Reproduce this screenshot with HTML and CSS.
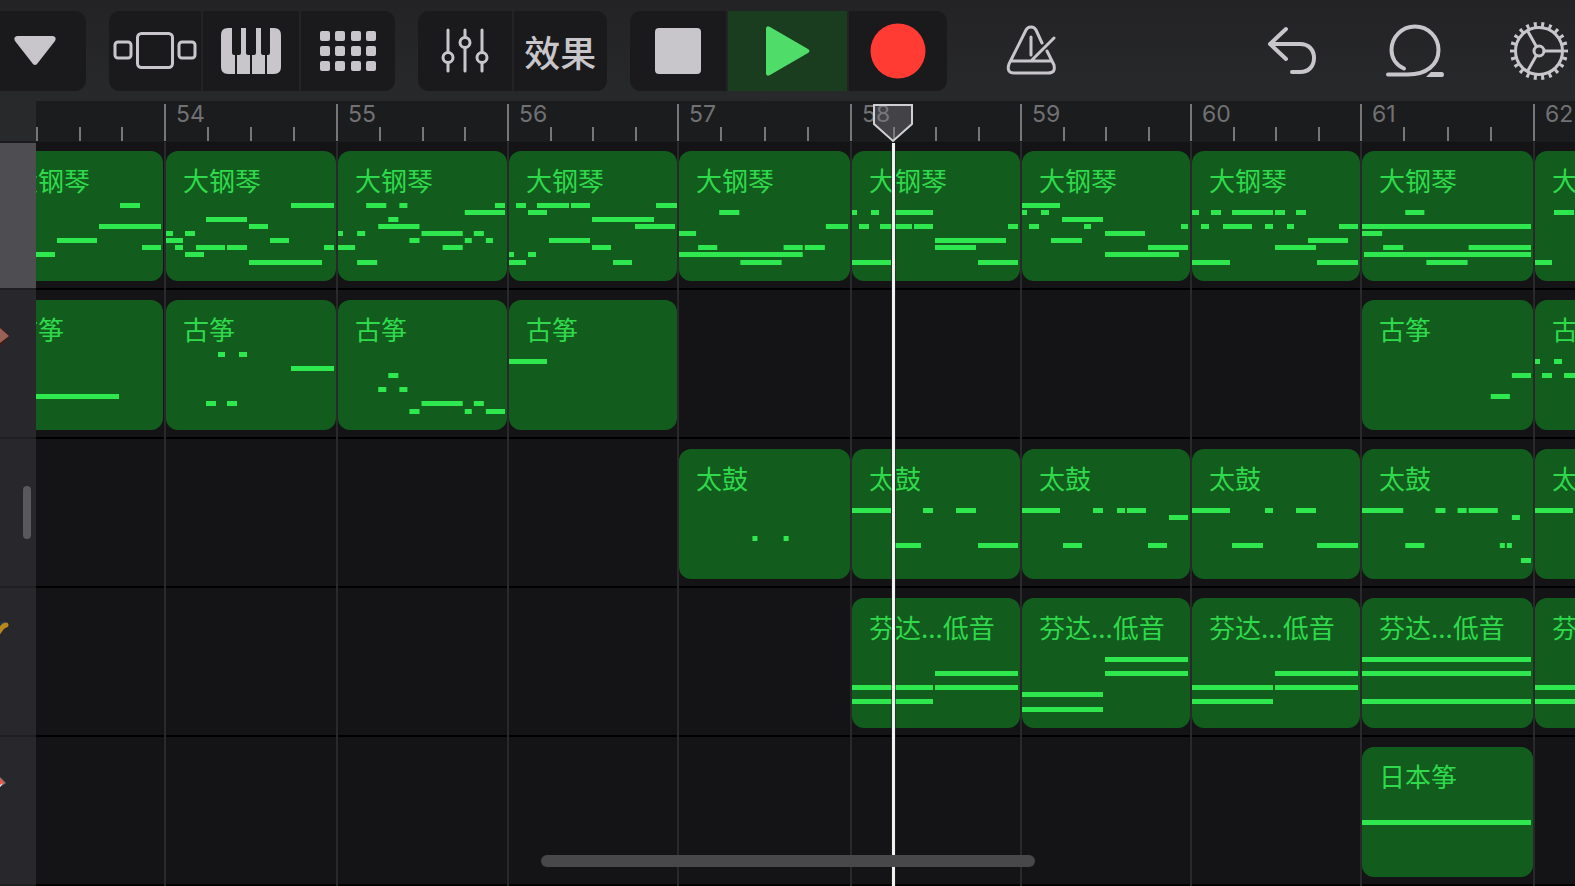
FILE: index.html
```html
<!DOCTYPE html>
<html lang="zh-CN">
<head>
<meta charset="utf-8">
<meta name="viewport" content="width=device-width, initial-scale=1">
<title>音轨视图</title>
<link rel="stylesheet" href="styles.css">
</head>
<body>
<div class="app">
  <header class="toolbar">
    <div class="group group-menu">
      <button class="tool" type="button" aria-label="菜单"><svg class="icon" width="44" height="32" viewBox="0 0 44 32"><path class="solid" d="M4 1H40Q44 2 42 6L24 29Q22 31 20 29L2 6Q0 2 4 1Z"/></svg></button>
    </div>
    <div class="group group-views">
      <button class="tool" type="button" aria-label="乐器浏览器"><svg class="icon" width="84" height="40" viewBox="0 0 84 40"><g class="line"><rect x="2" y="11" width="16" height="16" rx="3"/><rect x="24.500" y="2.500" width="35" height="34" rx="4"/><rect x="66" y="11" width="16" height="16" rx="3"/></g></svg></button>
      <button class="tool" type="button" aria-label="键盘"><svg class="icon" width="60" height="46" viewBox="0 0 60 46"><path class="solid" d="M7 0H11V25Q11 27 13 27H14V46H7Q0 46 0 39V7Q0 0 7 0Z"/><path class="solid" d="M20 0H25V25Q25 27 27 27H29V46H16V27H18Q20 27 20 25Z"/><path class="solid" d="M35 0H40V25Q40 27 42 27H44V46H31V27H33Q35 27 35 25Z"/><path class="solid" d="M49 0H53Q60 0 60 7V39Q60 46 53 46H46V27H47Q49 27 49 25Z"/></svg></button>
      <button class="tool" type="button" aria-label="循环乐段网格"><svg class="icon" width="56" height="40" viewBox="0 0 56 40"><g class="solid"><rect x="0" y="0" width="10" height="10" rx="2"/><rect x="15" y="0" width="10" height="10" rx="2"/><rect x="31" y="0" width="10" height="10" rx="2"/><rect x="46" y="0" width="10" height="10" rx="2"/><rect x="0" y="15" width="10" height="10" rx="2"/><rect x="15" y="15" width="10" height="10" rx="2"/><rect x="31" y="15" width="10" height="10" rx="2"/><rect x="46" y="15" width="10" height="10" rx="2"/><rect x="0" y="30" width="10" height="10" rx="2"/><rect x="15" y="30" width="10" height="10" rx="2"/><rect x="31" y="30" width="10" height="10" rx="2"/><rect x="46" y="30" width="10" height="10" rx="2"/></g></svg></button>
    </div>
    <div class="group group-mix">
      <button class="tool" type="button" aria-label="音轨控制"><svg class="icon" width="48" height="46" viewBox="0 0 48 46"><g class="line"><path d="M7 2V24M7 35V43M24 2V9M24 20V43M41 2V24M41 35V43"/><circle cx="7" cy="29.500" r="5"/><circle cx="24" cy="14.500" r="5"/><circle cx="41" cy="29.500" r="5"/></g></svg></button>
      <button class="tool tool-text" type="button">效果</button>
    </div>
    <div class="group group-transport">
      <button class="tool" type="button" aria-label="停止"><svg class="icon" width="46" height="46" viewBox="0 0 46 46"><rect class="solid" width="46" height="46" rx="4"/></svg></button>
      <button class="tool tool-play" type="button" aria-label="播放"><svg class="icon" width="44" height="50" viewBox="0 0 44 50"><path class="play" d="M0 2Q1-1 4 1L42 23Q45 25 42 27L4 49Q1 51 0 48Z"/></svg></button>
      <button class="tool" type="button" aria-label="录音"><svg class="icon" width="56" height="56" viewBox="0 0 56 56"><circle class="record" cx="28" cy="28" r="27.500"/></svg></button>
    </div>
    <div class="actions">
      <button class="plain" type="button" aria-label="节拍器"><svg class="icon" width="58" height="58" viewBox="0 0 58 58"><path class="line" d="M40 21L34 8C32 4 26 4 24 8L7 42C5 48 7 51 12 51H46C52 51 53 48 52 43L45 29M9 39H49M29 15V33M30 38L52 16"/></svg></button>
      <div class="actions-end">
        <button class="plain" type="button" aria-label="撤销"><svg class="icon" width="58" height="58" viewBox="0 0 58 58"><path class="line thick" d="M24 7L8 22L24 37M8 22H38C47 22 52 28 52 36C52 44 47 50 38 50H30"/></svg></button>
        <button class="plain" type="button" aria-label="循环浏览器"><svg class="icon" width="58" height="58" viewBox="0 0 58 58"><path class="line thick" d="M2 52.500H22C40 52.500 52.500 43 52.500 28A23.500 23.500 0 0 0 5.500 28C5.500 36 10 43 18 46.500"/><path class="solid" d="M45 50H56Q58 50 58 52.500T56 55H40Z"/></svg></button>
        <button class="plain" type="button" aria-label="设置"><svg class="icon" width="58" height="58" viewBox="0 0 58 58"><g class="line"><circle cx="29" cy="29" r="23.500"/><circle cx="29" cy="29" r="5"/><path d="M34 29H52M26.500 24.700L17.500 8.700M26.500 33.300L17.500 49.300"/></g><circle class="teeth" cx="29" cy="29" r="26.500" pathLength="220"/></svg></button>
      </div>
    </div>
  </header>

  <main class="workspace">
    <aside class="sidebar">
      <div class="side-top"></div>
      <div class="side-row side-selected"></div>
      <div class="side-row"><svg class="side-art" width="36" height="147" viewBox="0 0 36 147"><path fill="#4a1712" d="M0 37L9 46L0 56Z"/><path fill="#996257" d="M0 38L9 46L0 53Z"/></svg></div>
      <div class="side-row side-center"><span class="handle"></span></div>
      <div class="side-row"><svg class="side-art" width="36" height="147" viewBox="0 0 36 147"><path fill="none" stroke="#23344a" stroke-width="3" d="M0 36L5 34"/><path fill="none" stroke="#b98720" stroke-width="5" stroke-linecap="round" d="M-3 46C0 43 1 38 6 37"/></svg></div>
      <div class="side-row"><svg class="side-art" width="36" height="147" viewBox="0 0 36 147"><path fill="#777" d="M0 40L6 46L0 50Z"/><path fill="#ee5546" d="M0 41L4 46L0 48Z"/><path fill="#eee" d="M0 48L3 46L0 50Z"/></svg></div>
    </aside>

    <section class="timeline">
      <div class="ruler bars">
        <div class="bar bar-cut"><i class="tick"></i><i class="tick"></i><i class="tick"></i></div>
        <div class="bar"><span class="num">54</span><i class="tick"></i><i class="tick"></i><i class="tick"></i></div>
        <div class="bar"><span class="num">55</span><i class="tick"></i><i class="tick"></i><i class="tick"></i></div>
        <div class="bar"><span class="num">56</span><i class="tick"></i><i class="tick"></i><i class="tick"></i></div>
        <div class="bar"><span class="num">57</span><i class="tick"></i><i class="tick"></i><i class="tick"></i></div>
        <div class="bar"><span class="num">58</span><i class="tick"></i><i class="tick"></i><i class="tick"></i></div>
        <div class="bar"><span class="num">59</span><i class="tick"></i><i class="tick"></i><i class="tick"></i></div>
        <div class="bar"><span class="num">60</span><i class="tick"></i><i class="tick"></i><i class="tick"></i></div>
        <div class="bar"><span class="num">61</span><i class="tick"></i><i class="tick"></i><i class="tick"></i></div>
        <div class="bar bar-last"><span class="num">62</span></div>
      </div>

      <div class="tracks">
        <div class="lines bars"><i></i><i></i><i></i><i></i><i></i><i></i><i></i><i></i><i></i><i></i></div>

        <div class="track bars">
          <div class="clip b53"><span class="name">大钢琴</span><svg class="notes" viewBox="0 0 168 130" preserveAspectRatio="none"><path d="M125 54.500h20M104 75.500h62M62 89.500h40M147 96.500h19M41 103.500h19"/></svg></div>
          <div class="clip b54"><span class="name">大钢琴</span><svg class="notes" viewBox="0 0 170 130" preserveAspectRatio="none"><path d="M125 54.500h43M40 68.500h41M83 75.500h19M0 82.500h7M19 82.500h10M0 89.500h17M104 89.500h19M9 96.500h8M30 96.500h29M61 96.500h20M158 96.500h10M19 103.500h19M83 111.500h73"/></svg></div>
          <div class="clip b55"><span class="name">大钢琴</span><svg class="notes" viewBox="0 0 168 130" preserveAspectRatio="none"><path d="M28 54.500h20M61 54.500h8M156 54.500h10M126 61.500h40M50 68.500h10M40 75.500h41M0 82.500h5M19 82.500h8M83 82.500h41M135 82.500h10M71 89.500h10M126 89.500h7M147 89.500h7M0 96.500h17M104 96.500h20M19 111.500h20"/></svg></div>
          <div class="clip b56"><span class="name">大钢琴</span><svg class="notes" viewBox="0 0 168 130" preserveAspectRatio="none"><path d="M7 54.500h10M28 54.500h32M62 54.500h19M147 54.500h21M19 61.500h19M83 68.500h62M126 75.500h40M40 89.500h41M83 96.500h19M0 103.500h5M19 103.500h8M0 111.500h17M104 111.500h19"/></svg></div>
          <div class="clip b57"><span class="name">大钢琴</span><svg class="notes" viewBox="0 0 170 130" preserveAspectRatio="none"><path d="M40 61.500h20M146 75.500h22M0 82.500h17M19 96.500h19M104 96.500h19M125 96.500h20M0 103.500h123M61 111.500h41"/></svg></div>
          <div class="clip b58"><span class="name">大钢琴</span><svg class="notes" viewBox="0 0 168 130" preserveAspectRatio="none"><path d="M0 61.500h5M19 61.500h8M42 61.500h39M7 75.500h10M28 75.500h32M62 75.500h19M156 75.500h10M83 89.500h71M83 96.500h41M0 111.500h39M126 111.500h40"/></svg></div>
          <div class="clip b59"><span class="name">大钢琴</span><svg class="notes" viewBox="0 0 168 130" preserveAspectRatio="none"><path d="M0 54.500h38M0 61.500h5M19 61.500h8M40 68.500h41M7 75.500h10M62 75.500h7M159 75.500h7M83 82.500h40M29 89.500h31M126 96.500h40M83 103.500h74"/></svg></div>
          <div class="clip b60"><span class="name">大钢琴</span><svg class="notes" viewBox="0 0 168 130" preserveAspectRatio="none"><path d="M0 61.500h7M19 61.500h10M40 61.500h41M83 61.500h10M104 61.500h10M9 75.500h8M31 75.500h29M73 75.500h8M95 75.500h7M147 75.500h19M116 89.500h40M83 96.500h41M0 111.500h38M125 111.500h41"/></svg></div>
          <div class="clip b61"><span class="name">大钢琴</span><svg class="notes" viewBox="0 0 170 130" preserveAspectRatio="none"><path d="M43 61.500h19M0 75.500h168M0 82.500h20M21 96.500h20M106 96.500h62M2 103.500h166M64 111.500h41"/></svg></div>
          <div class="clip b62"><span class="name">大钢琴</span><svg class="notes" viewBox="0 0 168 130" preserveAspectRatio="none"><path d="M19 61.500h20M0 111.500h17"/></svg></div>
        </div>

        <div class="track bars">
          <div class="clip b53"><span class="name">古筝</span><svg class="notes" viewBox="0 0 168 130" preserveAspectRatio="none"><path d="M41 96.500h83"/></svg></div>
          <div class="clip b54"><span class="name">古筝</span><svg class="notes" viewBox="0 0 170 130" preserveAspectRatio="none"><path d="M52 54.500h7M73 54.500h8M125 68.500h43M40 103.500h10M61 103.500h10"/></svg></div>
          <div class="clip b55"><span class="name">古筝</span><svg class="notes" viewBox="0 0 168 130" preserveAspectRatio="none"><path d="M50 75.500h10M40 89.500h8M61 89.500h8M83 103.500h41M135 103.500h10M71 111.500h10M126 111.500h7M147 111.500h19"/></svg></div>
          <div class="clip b56"><span class="name">古筝</span><svg class="notes" viewBox="0 0 168 130" preserveAspectRatio="none"><path d="M0 61.500h38"/></svg></div>
          <div class="clip b61"><span class="name">古筝</span><svg class="notes" viewBox="0 0 170 130" preserveAspectRatio="none"><path d="M149 75.500h19M128 96.500h19"/></svg></div>
          <div class="clip b62"><span class="name">古筝</span><svg class="notes" viewBox="0 0 168 130" preserveAspectRatio="none"><path d="M0 61.500h5M19 61.500h8M7 75.500h10M29 75.500h31"/></svg></div>
        </div>

        <div class="track bars">
          <div class="clip b57"><span class="name">太鼓</span><svg class="notes" viewBox="0 0 170 130" preserveAspectRatio="none"><path d="M73 89.500h5M104 89.500h5"/></svg></div>
          <div class="clip b58"><span class="name">太鼓</span><svg class="notes" viewBox="0 0 168 130" preserveAspectRatio="none"><path d="M0 61.500h39M71 61.500h10M104 61.500h20M42 96.500h27M126 96.500h40"/></svg></div>
          <div class="clip b59"><span class="name">太鼓</span><svg class="notes" viewBox="0 0 168 130" preserveAspectRatio="none"><path d="M0 61.500h38M71 61.500h10M95 61.500h8M105 61.500h19M147 68.500h19M41 96.500h19M126 96.500h19"/></svg></div>
          <div class="clip b60"><span class="name">太鼓</span><svg class="notes" viewBox="0 0 168 130" preserveAspectRatio="none"><path d="M0 61.500h38M73 61.500h8M104 61.500h20M40 96.500h31M125 96.500h41"/></svg></div>
          <div class="clip b61"><span class="name">太鼓</span><svg class="notes" viewBox="0 0 170 130" preserveAspectRatio="none"><path d="M0 61.500h41M73 61.500h10M95 61.500h9M106 61.500h29M149 68.500h8M43 96.500h19M137 96.500h5M144 96.500h5M158 111.500h10"/></svg></div>
          <div class="clip b62"><span class="name">太鼓</span><svg class="notes" viewBox="0 0 168 130" preserveAspectRatio="none"><path d="M0 61.500h38M40 96.500h20"/></svg></div>
        </div>

        <div class="track bars">
          <div class="clip b58"><span class="name">芬达...低音</span><svg class="notes" viewBox="0 0 168 130" preserveAspectRatio="none"><path d="M83 75.500h83M0 89.500h81M83 89.500h83M0 103.500h81"/></svg></div>
          <div class="clip b59"><span class="name">芬达...低音</span><svg class="notes" viewBox="0 0 168 130" preserveAspectRatio="none"><path d="M83 61.500h83M83 75.500h83M0 96.500h81M0 111.500h81"/></svg></div>
          <div class="clip b60"><span class="name">芬达...低音</span><svg class="notes" viewBox="0 0 168 130" preserveAspectRatio="none"><path d="M83 75.500h83M0 89.500h81M83 89.500h83M0 103.500h81"/></svg></div>
          <div class="clip b61"><span class="name">芬达...低音</span><svg class="notes" viewBox="0 0 170 130" preserveAspectRatio="none"><path d="M0 61.500h168M0 75.500h168M0 103.500h168"/></svg></div>
          <div class="clip b62"><span class="name">芬达...低音</span><svg class="notes" viewBox="0 0 168 130" preserveAspectRatio="none"><path d="M0 89.500h81M0 103.500h81"/></svg></div>
        </div>

        <div class="track bars">
          <div class="clip b61"><span class="name">日本筝</span><svg class="notes" viewBox="0 0 170 130" preserveAspectRatio="none"><path d="M0 75.500h168"/></svg></div>
        </div>
      </div>

      <div class="playhead">
        <svg class="marker" width="42" height="40" viewBox="0 0 42 40"><path d="M2 2H40V21L21 38L2 21Z"/></svg>
        <div class="needle"></div>
      </div>
    </section>
  </main>
  <div class="scrollbar"></div>
</div>
</body>
</html>
```
FILE: styles.css
```css
* {
  box-sizing: border-box;
}

body {
  margin: 0;
  background: #141416;
  color: #c8c6ca;
  font-family: Inter, "Noto Sans CJK SC", sans-serif;
}

.app {
  position: relative;
  min-height: 100vh;
  overflow: hidden;
}

/* Toolbar */

.toolbar {
  display: flex;
  gap: 23px;
  height: 101px;
  padding: 11px 0 10px;
  background: linear-gradient(#232325, #28292b);
}

.group {
  display: grid;
  flex: none;
  gap: 2px;
  overflow: hidden;
  border-radius: 11px;
  background: #232325;
}

.group-menu {
  width: 86px;
  padding-right: 0;
  border-radius: 0 11px 11px 0;
}

.group-menu .tool {
  padding-right: 16px;
}

.group-views {
  grid-template-columns: 93fr 96fr 95fr;
  width: 286px;
}

.group-mix {
  grid-template-columns: 1fr 1fr;
  width: 189px;
}

.group-transport {
  grid-template-columns: 96fr 119fr 98fr;
  width: 317px;
}

.tool,
.plain {
  display: flex;
  align-items: center;
  justify-content: center;
  padding: 0;
  border: 0;
  background: #1a1a1c;
  color: inherit;
}

.plain {
  background: none;
}

.tool-text {
  font: 500 36px/40px "Noto Sans CJK SC", sans-serif;
}

.tool-play {
  background: #1a3d1f;
}

.actions {
  display: flex;
  flex: 1;
  justify-content: space-between;
  padding: 0 7px 0 32px;
}

.actions-end {
  display: flex;
  gap: 66px;
}

.icon {
  display: block;
  flex: none;
}

.solid {
  fill: #c8c6ca;
}

.line {
  fill: none;
  stroke: #c8c6ca;
  stroke-width: 3;
  stroke-linecap: round;
  stroke-linejoin: round;
}

.thick {
  stroke-width: 4;
}

.teeth {
  fill: none;
  stroke: #c8c6ca;
  stroke-width: 5;
  stroke-dasharray: 4 6;
  stroke-dashoffset: 2;
}

.play {
  fill: #4fdc68;
}

.record {
  fill: #ff3b33;
}

/* Track headers */

.workspace {
  display: flex;
}

.sidebar {
  flex: none;
  width: 36px;
  background: #28282c;
}

.side-top {
  height: 42px;
  border-bottom: 2px solid #1c1c1e;
  background: #28292b;
}

.side-row {
  height: 149px;
  border-bottom: 2px solid #1f1f22;
}

.side-selected {
  height: 147px;
  background: #4e4d51;
}

.side-art {
  display: block;
}

.side-center {
  display: flex;
  align-items: center;
  justify-content: flex-end;
  padding-right: 5px;
}

.handle {
  width: 8px;
  height: 53px;
  border-radius: 4px;
  background: #59595b;
}

/* Timeline */

.timeline {
  position: relative;
  flex: 1;
  min-width: 0;
  overflow: hidden;
}

.bars {
  display: grid;
  grid-template-columns:
    minmax(0, 128fr) minmax(0, 172fr) minmax(0, 171fr) minmax(0, 170fr)
    minmax(0, 173fr) minmax(0, 170fr) minmax(0, 170fr) minmax(0, 170fr)
    minmax(0, 173fr) minmax(0, 42fr);
}

.ruler {
  height: 41px;
  padding-top: 3px;
  background: #1b1c1e;
}

.bar {
  display: grid;
  grid-template-columns: repeat(4, minmax(0, 1fr));
  align-items: end;
}

.bar-cut {
  grid-template-columns: repeat(3, minmax(0, 1fr));
}

.bar-last {
  grid-template-columns: 1fr;
}

.num {
  align-self: stretch;
  padding-left: 10px;
  border-left: 2px solid #77777a;
  color: #717174;
  font-size: 23px;
  line-height: 20px;
}

.tick {
  height: 15px;
  border-left: 2px solid #77777a;
}

.tracks {
  position: relative;
  margin-top: -1px;
  border-top: 1px solid #1b1c1e;
}

.lines {
  position: absolute;
  inset: 0;
}

.lines i + i {
  border-left: 2px solid #29292b;
}

.track {
  height: 149px;
  padding: 10px 0 7px;
  border-bottom: 2px solid #000;
}

.track:nth-child(2) {
  height: 148px;
  padding-top: 9px;
}

.clip {
  position: relative;
  display: grid;
  grid-row: 1;
  height: 130px;
  margin-left: 2px;
  overflow: hidden;
  border-radius: 12px;
  background: #125d1d;
}

.b53 { grid-column: 1; margin-left: -41px; margin-right: 1px; }
.b54 { grid-column: 2; }
.b55 { grid-column: 3; }
.b56 { grid-column: 4; }
.b57 { grid-column: 5; }
.b58 { grid-column: 6; }
.b59 { grid-column: 7; }
.b60 { grid-column: 8; }
.b61 { grid-column: 9; }
.b62 { grid-column: 10; margin-right: -128px; }

.name,
.notes {
  grid-area: 1 / 1;
}

.name {
  padding: 14px 0 0 17px;
  color: #30d94c;
  font: 400 26px/30px "Noto Sans CJK SC", sans-serif;
  white-space: nowrap;
}

.notes {
  width: 100%;
  height: 130px;
}

.notes path {
  fill: none;
  stroke: #2fe850;
  stroke-width: 5;
}

/* Overlays */

.playhead {
  position: absolute;
  top: 2px;
  bottom: 0;
  left: 55.7%;
  display: flex;
  flex-direction: column;
  align-items: center;
  width: 42px;
  margin-left: -21px;
}

.marker {
  flex: none;
  fill: rgba(128, 128, 132, 0.4);
  stroke: #d0d0d2;
  stroke-width: 2;
}

.needle {
  flex: 1;
  width: 5px;
  border: solid rgba(30, 40, 32, 0.6);
  border-width: 0 1px;
  background: #f2f2f2;
  background-clip: padding-box;
}

.scrollbar {
  position: absolute;
  bottom: 19px;
  left: 50%;
  width: 494px;
  height: 12px;
  margin-left: -247px;
  border-radius: 6px;
  background: #484749;
}
```
